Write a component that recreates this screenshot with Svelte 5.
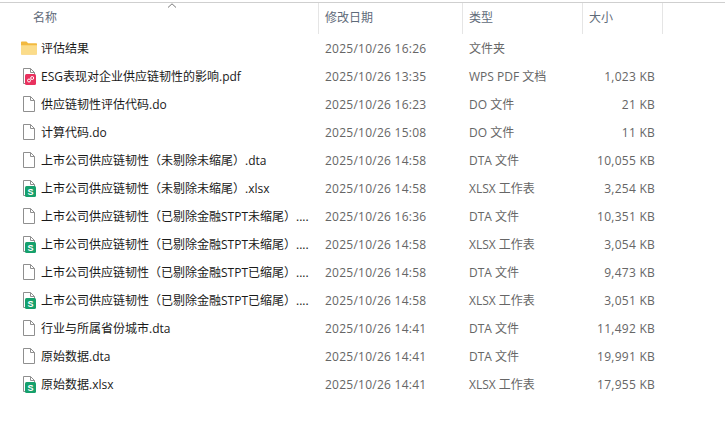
<script>
  const rows = [
    { icon: "folder", name: "评估结果", date: "2025/10/26 16:26", type: "文件夹", size: "" },
    { icon: "pdf", name: "ESG表现对企业供应链韧性的影响.pdf", date: "2025/10/26 13:35", type: "WPS PDF 文档", size: "1,023 KB" },
    { icon: "file", name: "供应链韧性评估代码.do", date: "2025/10/26 16:23", type: "DO 文件", size: "21 KB" },
    { icon: "file", name: "计算代码.do", date: "2025/10/26 15:08", type: "DO 文件", size: "11 KB" },
    { icon: "file", name: "上市公司供应链韧性（未剔除未缩尾）.dta", date: "2025/10/26 14:58", type: "DTA 文件", size: "10,055 KB" },
    { icon: "xlsx", name: "上市公司供应链韧性（未剔除未缩尾）.xlsx", date: "2025/10/26 14:58", type: "XLSX 工作表", size: "3,254 KB" },
    { icon: "file", name: "上市公司供应链韧性（已剔除金融STPT未缩尾）....", date: "2025/10/26 16:36", type: "DTA 文件", size: "10,351 KB" },
    { icon: "xlsx", name: "上市公司供应链韧性（已剔除金融STPT未缩尾）....", date: "2025/10/26 14:58", type: "XLSX 工作表", size: "3,054 KB" },
    { icon: "file", name: "上市公司供应链韧性（已剔除金融STPT已缩尾）....", date: "2025/10/26 14:58", type: "DTA 文件", size: "9,473 KB" },
    { icon: "xlsx", name: "上市公司供应链韧性（已剔除金融STPT已缩尾）....", date: "2025/10/26 14:58", type: "XLSX 工作表", size: "3,051 KB" },
    { icon: "file", name: "行业与所属省份城市.dta", date: "2025/10/26 14:41", type: "DTA 文件", size: "11,492 KB" },
    { icon: "file", name: "原始数据.dta", date: "2025/10/26 14:41", type: "DTA 文件", size: "19,991 KB" },
    { icon: "xlsx", name: "原始数据.xlsx", date: "2025/10/26 14:41", type: "XLSX 工作表", size: "17,955 KB" },
  ];
</script>

<div class="window">
  <div class="head">
    <div class="hcell name">
      名称
      <svg class="sort" width="10" height="5" viewBox="0 0 10 5"><path d="M1 4.5 5 .8l4 3.7" fill="none" stroke="#7a7a7a" /></svg>
    </div>
    <div class="hcell date">修改日期</div>
    <div class="hcell type">类型</div>
    <div class="hcell size">大小</div>
  </div>

  {#each rows as row}
    <div class="row">
      <div class="cell name">
        <svg class="icon" width="18" height="18" viewBox="0 0 18 18">
          {#if row.icon === "folder"}
            <path d="M1 3.5c0-.6.4-1 1-1h4.4l1.8 1.7H16c.6 0 1 .4 1 1V14.5c0 .6-.4 1-1 1H2c-.6 0-1-.4-1-1z" fill="#f2b93f" />
            <path d="M1 6.2h16V14.5c0 .6-.4 1-1 1H2c-.6 0-1-.4-1-1z" fill="#fbdc8a" />
          {:else}
            <path d="M3.5 1.5h7l4 4v11h-11z" fill="#fff" stroke="#8f8f8f" />
            <path d="M10.5 1.5v4h4" fill="none" stroke="#8f8f8f" />
            {#if row.icon === "pdf"}
              <rect x="5" y="7" width="11" height="11" rx="1.5" fill="#e8315e" />
              <circle cx="9" cy="13.5" r="1.5" fill="none" stroke="#fff" />
              <circle cx="12.2" cy="11" r="1.5" fill="none" stroke="#fff" />
            {:else if row.icon === "xlsx"}
              <rect x="5" y="7" width="11" height="11" rx="1.5" fill="#16a06c" />
              <text x="10.5" y="16" class="s">S</text>
            {/if}
          {/if}
        </svg>
        <span class="fname">{row.name}</span>
      </div>
      <div class="cell date">{row.date}</div>
      <div class="cell type">{row.type}</div>
      <div class="cell size">{row.size}</div>
    </div>
  {/each}
</div>

<style>
  :global(body) {
    background: #fff;
    overflow: hidden;
  }

  .window {
    height: 431px;
    box-sizing: border-box;
    border-top: 1px solid #cfcfcf;
    margin-top: 2px;
    font-family: "Open Sans", "Noto Sans CJK SC", sans-serif;
    font-size: 12px;
    color: #666;
  }

  .head {
    display: flex;
    height: 31px;
  }

  .hcell {
    position: relative;
    box-sizing: border-box;
    padding-left: 6px;
    line-height: 29px;
    color: #5f6b7a;
    border-right: 1px solid #e5e5e5;
  }

  .row {
    display: flex;
    height: 28px;
    align-items: center;
  }

  .cell {
    box-sizing: border-box;
    padding-left: 6px;
    white-space: nowrap;
  }

  .name {
    width: 319px;
  }

  .hcell.name {
    padding-left: 33px;
  }

  .cell.name {
    display: flex;
    align-items: center;
    padding-left: 20px;
    color: #1a1a1a;
  }

  .fname {
    margin-left: 3px;
  }

  .date {
    width: 144px;
  }

  .type {
    width: 120px;
  }

  .size {
    width: 80px;
  }

  .cell.date,
  .cell.size {
    letter-spacing: 0.25px;
  }

  .cell.size {
    padding: 0 8px 0 0;
    text-align: right;
  }

  .sort {
    position: absolute;
    left: 167px;
    top: 0;
  }

  .icon {
    flex: none;
  }

  .s {
    font: bold 9px "Liberation Sans", sans-serif;
    fill: #fff;
    text-anchor: middle;
  }
</style>
